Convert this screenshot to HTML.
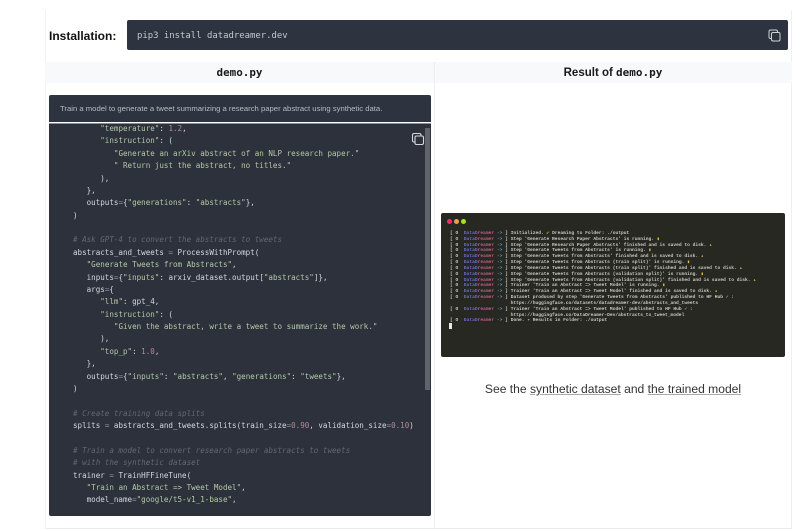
<!DOCTYPE html>
<html><head><meta charset="utf-8">
<style>
html,body{margin:0;padding:0;width:800px;height:531px;overflow:hidden;background:#fff;font-family:"Liberation Sans",sans-serif}
.a{position:absolute}
pre{margin:0;font-family:"DejaVu Sans Mono","Liberation Mono",monospace}
.code{left:73px;top:123px;font-size:7.55px;line-height:12.37px;color:#d5d8de;white-space:pre;filter:blur(.25px)}
.s{color:#b4c9a6}.n{color:#b58a96}.c{color:#616875;font-style:italic}.o{color:#8f96a3}
.term{left:450px;top:231px;font-size:4.6px;line-height:5.83px;color:#c9c9c0;white-space:pre;font-family:"Liberation Mono",monospace;font-weight:bold;filter:blur(.2px)}
.t1{color:#6a6ad0}.t2{color:#c05a8a}.t3{color:#5a9ad0}.y{color:#e8c040}
</style></head><body>
<div class="a" style="left:45px;top:10px;width:747px;height:519px;border-left:1px solid #f2f3f4;border-right:1px solid #eef0f1;border-bottom:1px solid #e9ebec;box-sizing:border-box"></div>
<div class="a" style="left:49px;top:28px;font-size:12px;font-weight:bold;color:#111;line-height:16px">Installation:</div>
<div class="a" style="left:127px;top:20px;width:661px;height:30px;background:#2e343f;border-radius:2px"></div>
<pre class="a" style="left:137px;top:30px;font-size:8.95px;line-height:12px;color:#c4c8cf">pip3 install datadreamer.dev</pre>
<svg class="a" style="left:768px;top:29px" width="13" height="13" viewBox="0 0 13 13" fill="none" stroke="#cfd2d6" stroke-width="1"><rect x="3.5" y="3.5" width="8.5" height="8.5" rx="1.5"/><path d="M3 9.5H2.5A1.5 1.5 0 0 1 1 8V2.5A1.5 1.5 0 0 1 2.500 1H8A1.500 1.500 0 0 1 9.500 2.500V3"/></svg>

<div class="a" style="left:45px;top:62px;width:747px;height:21px;background:#f8f9fa"></div>
<div class="a" style="left:434px;top:62px;width:1px;height:467px;background:#eceeef"></div>
<pre class="a" style="left:45px;top:64.500px;width:389px;text-align:center;font-size:10.900px;line-height:16px;font-weight:bold;color:#1a1a1a">demo.py</pre>
<div class="a" style="left:435px;top:65px;width:356px;text-align:center;font-size:11.500px;line-height:16px;font-weight:bold;color:#1a1a1a">Result of <span style="font-family:'DejaVu Sans Mono',monospace;font-size:11px">demo.py</span></div>

<div class="a" style="left:49px;top:95px;width:382px;height:27px;background:#2e343f;border-radius:2px 2px 0 0"></div>
<div class="a" style="left:60px;top:103px;font-size:7.7px;line-height:12px;color:#b6bac1;white-space:nowrap">Train a model to generate a tweet summarizing a research paper abstract using synthetic data.</div>
<div class="a" style="left:49px;top:123px;width:382px;height:393px;background:#2c313c;border-radius:0 0 2px 2px;border-top:1px solid #8a8f97;box-sizing:border-box"></div>
<div class="a" style="left:425px;top:128px;width:5px;height:262px;background:#5f636b"></div>
<svg class="a" style="left:411px;top:132px" width="14" height="14" viewBox="0 0 14 14" fill="none" stroke="#d4d6da" stroke-width="1.100"><rect x="4" y="4" width="8.500" height="8.500" rx="1.500"/><path d="M3.500 10H3A1.500 1.500 0 0 1 1.500 8.500V3A1.500 1.500 0 0 1 3 1.500H8.500A1.500 1.500 0 0 1 10 3V3.500"/></svg>

<pre class="a code">      <span class="s">"temperature"</span>: <span class="n">1.2</span>,
      <span class="s">"instruction"</span>: (
         <span class="s">"Generate an arXiv abstract of an NLP research paper."</span>
         <span class="s">" Return just the abstract, no titles."</span>
      ),
   },
   outputs<span class="o">=</span>{<span class="s">"generations"</span>: <span class="s">"abstracts"</span>},
)

<span class="c"># Ask GPT-4 to convert the abstracts to tweets</span>
abstracts_and_tweets <span class="o">=</span> ProcessWithPrompt(
   <span class="s">"Generate Tweets from Abstracts"</span>,
   inputs<span class="o">=</span>{<span class="s">"inputs"</span>: arxiv_dataset.output[<span class="s">"abstracts"</span>]},
   args<span class="o">=</span>{
      <span class="s">"llm"</span>: gpt_4,
      <span class="s">"instruction"</span>: (
         <span class="s">"Given the abstract, write a tweet to summarize the work."</span>
      ),
      <span class="s">"top_p"</span>: <span class="n">1.0</span>,
   },
   outputs<span class="o">=</span>{<span class="s">"inputs"</span>: <span class="s">"abstracts"</span>, <span class="s">"generations"</span>: <span class="s">"tweets"</span>},
)

<span class="c"># Create training data splits</span>
splits <span class="o">=</span> abstracts_and_tweets.splits(train_size<span class="o">=</span><span class="n">0.90</span>, validation_size<span class="o">=</span><span class="n">0.10</span>)

<span class="c"># Train a model to convert research paper abstracts to tweets</span>
<span class="c"># with the synthetic dataset</span>
trainer <span class="o">=</span> TrainHFFineTune(
   <span class="s">"Train an Abstract =&gt; Tweet Model"</span>,
   model_name<span class="o">=</span><span class="s">"google/t5-v1_1-base"</span>,</pre>

<div class="a" style="left:441px;top:213px;width:344px;height:144px;background:#272822;border-radius:2px"></div>
<div class="a" style="left:447px;top:218.5px;width:5px;height:5px;border-radius:50%;background:#f0306a"></div>
<div class="a" style="left:453.500px;top:218.5px;width:5px;height:5px;border-radius:50%;background:#e8a050"></div>
<div class="a" style="left:461px;top:218.5px;width:5px;height:5px;border-radius:50%;background:#a8e020"></div>
<pre class="a term">[ O  <span class="t1">DataD</span><span class="t2">reamer</span> <span class="t3">-&gt;</span> ] Initialized. <span class="y">✔</span> Dreaming to Folder: ./output
[ O  <span class="t1">DataD</span><span class="t2">reamer</span> <span class="t3">-&gt;</span> ] Step 'Generate Research Paper Abstracts' is running. <span class="y">▮</span>
[ O  <span class="t1">DataD</span><span class="t2">reamer</span> <span class="t3">-&gt;</span> ] Step 'Generate Research Paper Abstracts' finished and is saved to disk. <span class="y">▴</span>
[ O  <span class="t1">DataD</span><span class="t2">reamer</span> <span class="t3">-&gt;</span> ] Step 'Generate Tweets from Abstracts' is running. <span class="y">▮</span>
[ O  <span class="t1">DataD</span><span class="t2">reamer</span> <span class="t3">-&gt;</span> ] Step 'Generate Tweets from Abstracts' finished and is saved to disk. <span class="y">▴</span>
[ O  <span class="t1">DataD</span><span class="t2">reamer</span> <span class="t3">-&gt;</span> ] Step 'Generate Tweets from Abstracts (train split)' is running. <span class="y">▮</span>
[ O  <span class="t1">DataD</span><span class="t2">reamer</span> <span class="t3">-&gt;</span> ] Step 'Generate Tweets from Abstracts (train split)' finished and is saved to disk. <span class="y">▴</span>
[ O  <span class="t1">DataD</span><span class="t2">reamer</span> <span class="t3">-&gt;</span> ] Step 'Generate Tweets from Abstracts (validation split)' is running. <span class="y">▮</span>
[ O  <span class="t1">DataD</span><span class="t2">reamer</span> <span class="t3">-&gt;</span> ] Step 'Generate Tweets from Abstracts (validation split)' finished and is saved to disk. <span class="y">▴</span>
[ O  <span class="t1">DataD</span><span class="t2">reamer</span> <span class="t3">-&gt;</span> ] Trainer 'Train an Abstract =&gt; Tweet Model' is running. <span class="y">▮</span>
[ O  <span class="t1">DataD</span><span class="t2">reamer</span> <span class="t3">-&gt;</span> ] Trainer 'Train an Abstract =&gt; Tweet Model' finished and is saved to disk. <span class="y">▴</span>
[ O  <span class="t1">DataD</span><span class="t2">reamer</span> <span class="t3">-&gt;</span> ] Dataset produced by step 'Generate Tweets from Abstracts' published to HF Hub ✓ :
                      https://huggingface.co/datasets/datadreamer-dev/abstracts_and_tweets
[ O  <span class="t1">DataD</span><span class="t2">reamer</span> <span class="t3">-&gt;</span> ] Trainer 'Train an Abstract =&gt; Tweet Model' published to HF Hub ✓ :
                      https://huggingface.co/DataDreamer-Dev/abstracts_to_tweet_model
[ O  <span class="t1">DataD</span><span class="t2">reamer</span> <span class="t3">-&gt;</span> ] Done. <span class="y">✦</span> Results in Folder: ./output</pre>
<div class="a" style="left:449px;top:323px;width:3px;height:6px;background:#e8e8e8"></div>

<div class="a" style="left:435px;top:381px;width:356px;text-align:center;font-size:12.100px;line-height:16px;color:#333;white-space:nowrap">See the <span style="text-decoration:underline;text-decoration-color:#aaa">synthetic dataset</span> and <span style="text-decoration:underline;text-decoration-color:#aaa">the trained model</span></div>
</body></html>
